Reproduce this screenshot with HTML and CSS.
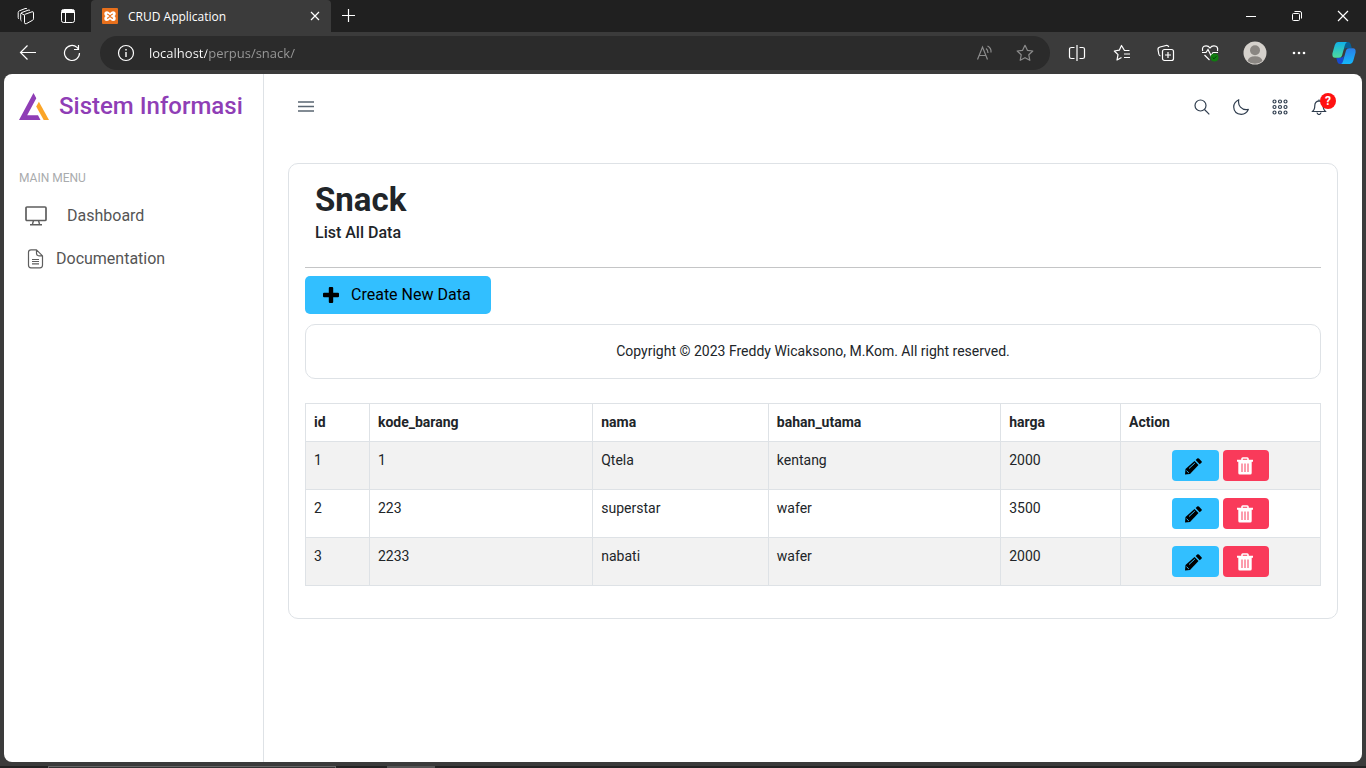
FILE: index.html
```html
<!DOCTYPE html>
<html lang="id">
<head>
<meta charset="utf-8">
<meta name="viewport" content="width=device-width, initial-scale=1">
<title>CRUD Application</title>
<link rel="stylesheet" href="styles.css">
</head>
<body>
<svg class="sprite" aria-hidden="true">
  <symbol id="pencil" viewBox="0 0 18 18">
    <path d="M1 17.500l.5-5.500L10.500 4l4 4L6 17z"/>
    <path d="M11.700 3L13.200 1.500q.8-.7 1.700.1l2.600 2.700q.7.800-.1 1.500L15.700 7.200z"/>
    <path class="pencil-shine" d="M5 11.500l5.800-5.400M2.500 13.700l2.300 2.200"/>
  </symbol>
  <symbol id="trash" viewBox="0 0 18 18">
    <path fill="none" stroke="currentColor" stroke-width="1.600" d="M6 3V1.800Q6 1 6.800 1h4.400q.8 0 .8.800V3"/>
    <path d="M1 2.800h16v2h-1.300V16q0 1.500-1.500 1.500H3.800Q2.300 17.500 2.300 16V4.800H1z"/>
    <path class="trash-slots" d="M6 6.500v8.500M9 6.500v8.500M12 6.500v8.500"/>
  </symbol>
</svg>

<div class="browser">
  <header class="titlebar">
    <button class="chrome-btn strip-btn" aria-label="Workspaces">
      <svg class="line-icon" width="18" height="18" viewBox="0 0 18 18"><path stroke-linejoin="round" d="M7.500 8.500q0-1 1-1.400l6.500-2.300q1.500-.4 1.500 1v6q0 1-1 1.500l-6 3.300q-2 .8-2-1zM4.500 14q-.8-.4-.8-1.500V7.200q0-1.200 1.200-1.700L11 3.200q1.300-.5 2 .3M2 12q-.8-.5-.8-1.500V5.500q0-1.200 1.200-1.700L8 1.600q1.300-.5 2 .2M7.500 8.200L4 6.200"/></svg>
    </button>
    <button class="chrome-btn strip-btn" aria-label="Tab actions">
      <svg class="line-icon" width="16" height="16" viewBox="0 0 16 16"><rect x="1.500" y="1.500" width="13" height="13" rx="2"/><path stroke-width="3" d="M2 3.500h12"/><path d="M5.500 5v9"/></svg>
    </button>
    <div class="tab">
      <svg width="16" height="16" viewBox="0 0 16 16"><rect width="16" height="16" rx="1" fill="#e8701c"/><path d="M5 3.200q1.500 0 3 1.700 1.500-1.700 3-1.700 2.700 0 2.700 2.500 0 1.600-1.200 2.400 1.200.8 1.200 2.300 0 2.500-2.700 2.500-1.500 0-3-1.700-1.500 1.700-3 1.700-2.700 0-2.700-2.500 0-1.500 1.200-2.300-1.200-.8-1.200-2.400 0-2.500 2.700-2.500z" fill="#fff"/><path d="M5 6q1.500.2 3 2.100Q9.500 6.200 11 6M5 10.400q1.500-.2 3-2.300 1.500 2.100 3 2.300" fill="none" stroke="#e8701c" stroke-width="1.200"/></svg>
      <span class="tab-title">CRUD Application</span>
      <button class="chrome-btn tab-close" aria-label="Close tab">
        <svg class="line-icon" width="10" height="10" viewBox="0 0 10 10"><path stroke-width="1.200" d="M1 1l8 8M9 1L1 9"/></svg>
      </button>
    </div>
    <button class="chrome-btn new-tab" aria-label="New tab">
      <svg class="line-icon" width="14" height="14" viewBox="0 0 14 14"><path stroke-width="1.200" d="M6.500 0v13M0 6.500h13"/></svg>
    </button>
    <div class="window-controls">
      <button class="chrome-btn" aria-label="Minimize"><svg class="line-icon" width="10" height="10" viewBox="0 0 10 10"><path d="M0 5.500h10"/></svg></button>
      <button class="chrome-btn" aria-label="Restore"><svg class="line-icon" width="12" height="12" viewBox="0 0 12 12"><rect x="1.500" y="3.500" width="7" height="7" rx="1"/><path d="M3.500 1.500H9q1.500 0 1.500 1.500v5.500"/></svg></button>
      <button class="chrome-btn" aria-label="Close"><svg class="line-icon" width="12" height="12" viewBox="0 0 12 12"><path stroke-width="1.200" d="M1 1l10 10M11 1L1 11"/></svg></button>
    </div>
  </header>

  <div class="toolbar">
    <button class="chrome-btn nav-btn" aria-label="Back"><svg class="line-icon" width="18" height="18" viewBox="0 0 18 18"><path stroke-width="1.200" d="M17 8.500H1.500M8.500 1.500l-7 7 7 7"/></svg></button>
    <button class="chrome-btn nav-btn" aria-label="Refresh"><svg class="line-icon" width="18" height="18" viewBox="0 0 18 18"><path stroke-width="1.200" d="M16.500 9A7.500 7.500 0 1 1 14 3.400L15.500 5M15.500 1v4.500H11"/></svg></button>
    <div class="address">
      <svg class="line-icon" width="18" height="18" viewBox="0 0 18 18"><circle cx="9" cy="9" r="7.500" stroke-width="1.200"/><path stroke-width="1.400" d="M9 8v5M9 5v1.500"/></svg>
      <input class="url" type="text" aria-label="Address" value="localhost/perpus/snack/">
      <button class="chrome-btn address-btn" aria-label="Read aloud"><svg class="line-icon" width="18" height="18" viewBox="0 0 18 18"><path stroke-width="1.200" d="M1.500 15.500L6.500 3l5 12.500M3.200 11.500h6.600M10 4.500q2 1.500 2 4.500M11.500 2q4 2 3.500 6.500"/></svg></button>
      <button class="chrome-btn address-btn" aria-label="Add to favorites"><svg class="line-icon" width="18" height="18" viewBox="0 0 18 18"><path stroke-width="1.200" stroke-linejoin="round" d="M9 1.300l2.400 5 5.400.700-4 3.800 1 5.500L9 13.700l-4.800 2.600 1-5.500-4-3.800 5.400-.7z"/></svg></button>
    </div>
    <div class="extensions">
      <button class="chrome-btn" aria-label="Split screen"><svg class="line-icon" width="18" height="18" viewBox="0 0 18 18"><path stroke-width="1.200" d="M6.500 3.500H3.500Q1.500 3.500 1.500 5v8q0 1.500 2 1.500h3M11.500 3.500h3q2 0 2 1.500v8q0 1.500-2 1.500h-3M9 1v16"/></svg></button>
      <button class="chrome-btn" aria-label="Favorites"><svg class="line-icon" width="18" height="18" viewBox="0 0 18 18"><path stroke-width="1.200" stroke-linejoin="round" d="M16.500 6.500h-5L8.500 1.500 6.300 6.200l-5 .8 3.700 3.600-1 5.400 4.500-2.500M11 10h6M11 13.500h6"/></svg></button>
      <button class="chrome-btn" aria-label="Collections"><svg class="line-icon" width="18" height="18" viewBox="0 0 18 18"><rect x="5.500" y="5.500" width="11" height="11" rx="2" stroke-width="1.200"/><path stroke-width="1.200" d="M11 8v6M8 11h6M3.500 12Q2 11.500 1.800 10L1 5.500Q.8 3.500 3 3l6-1.500q2-.4 2.800 1.500"/></svg></button>
      <button class="chrome-btn" aria-label="Browser essentials"><svg class="line-icon" width="18" height="18" viewBox="0 0 18 18"><path stroke-width="1.200" d="M1.700 7Q.5 2 5 1.800 7.500 1.700 9 4q1.500-2.300 4-2.200Q17.500 2 16.500 7M3.500 11l5 5M1 8.500h4l2-3 3 6 2-3h5"/><circle class="status-ok" cx="13.500" cy="13.500" r="4"/><path stroke="#043f08" d="M11.700 13.600l1.300 1.200 2.300-2.400"/></svg></button>
      <button class="chrome-btn" aria-label="Profile"><svg width="24" height="24" viewBox="0 0 24 24"><circle cx="12" cy="12" r="11.500" fill="#d5d1cc"/><circle cx="12" cy="9.300" r="5" fill="#8a8682"/><path d="M4.500 20q1-4.700 7.500-4.700t7.500 4.700a11.300 11.300 0 0 1-15 0z" fill="#8a8682"/></svg></button>
      <button class="chrome-btn" aria-label="Settings and more"><svg width="14" height="4" viewBox="0 0 14 4" fill="#fff"><circle cx="2" cy="2" r="1.300"/><circle cx="7" cy="2" r="1.300"/><circle cx="12" cy="2" r="1.300"/></svg></button>
      <button class="chrome-btn" aria-label="Copilot"><svg width="24" height="24" viewBox="0 0 24 24">
        <defs>
          <linearGradient id="cp-left" x1="0" y1="0" x2="0" y2="1"><stop offset="0" stop-color="#0fb0e8"/><stop offset="1" stop-color="#50dc9a"/></linearGradient>
          <linearGradient id="cp-right" x1="0" y1="0" x2="0" y2="1"><stop offset="0" stop-color="#2a7de8"/><stop offset="1" stop-color="#14b8fa"/></linearGradient>
        </defs>
        <path d="M13 1h3q2 0 2.600 2l1.200 4h-5q-2 0-2.600 2z" fill="#075f95"/>
        <path d="M11 23H8q-2 0-2.600-2L4.200 16.500h5q2 0 2.600-2z" fill="#174bd0"/>
        <path d="M6 1h9q-1.300.5-1.900 2.500L10 14.500q-.7 2.200-3 2.200H3Q0 16.700.4 12.500L2.800 4Q3.700 1 6 1z" fill="url(#cp-left)"/>
        <path d="M18 23H9q1.300-.5 1.900-2.500L14 9.500q.7-2.200 3-2.200h4q3 0 2.600 4.200L21.200 20q-.9 3-3.200 3z" fill="url(#cp-right)"/>
      </svg></button>
    </div>
  </div>

  <div class="page">
    <aside class="sidebar">
      <a class="brand" href="#">
        <svg width="30" height="28" viewBox="0 0 30 28"><path d="M0 28L14.500 1l2.800 5.200L8.200 23.300H19L21.500 28z" fill="#8f3eb6"/><path d="M17.200 14.500l2.700-4.700L30 28h-5.300z" fill="#fba527"/></svg>
        <span>Sistem Informasi</span>
      </a>
      <h2 class="menu-label">MAIN MENU</h2>
      <nav class="menu">
        <a class="menu-item menu-item-wide" href="#">
          <svg width="22" height="20" viewBox="0 0 22 20"><rect x="1" y="1" width="20" height="13.500" rx="1" stroke-width="1.700"/><path stroke-width="1.400" d="M8.500 14.500L7.500 18M13.500 14.500l1 3.500M5 18.800h12"/></svg>
          <span>Dashboard</span>
        </a>
        <a class="menu-item" href="#">
          <svg width="22" height="20" viewBox="0 0 22 20"><path stroke-width="1.200" stroke-linejoin="round" d="M11.500.800H6Q3.500.800 3.500 3.300v13Q3.500 18.800 6 18.800h9q2.500 0 2.500-2.500V6.800zM11.500.800v3.500q0 2.500 2.500 2.500h3.500M7 10.500h7M7 12.500h7M7 14.800h7"/></svg>
          <span>Documentation</span>
        </a>
      </nav>
    </aside>

    <main class="content">
      <div class="topbar">
        <button class="tool menu-toggle" aria-label="Toggle menu"><svg width="16" height="12" viewBox="0 0 16 12"><path d="M0 1h16M0 5.500h16M0 10h16"/></svg></button>
        <div class="tools">
          <button class="tool" aria-label="Search"><svg width="16" height="16" viewBox="0 0 16 16"><circle cx="6.500" cy="6.500" r="5.500"/><path d="M10.500 10.500l4.800 4.800"/></svg></button>
          <button class="tool" aria-label="Dark mode"><svg width="16" height="16" viewBox="0 0 16 16"><path stroke-linejoin="round" d="M5.800.700Q4.800 5 7.500 8.200q3 3.300 7.800 2.200-2 4.700-7 4.900Q1 14.800.7 8 .8 3 5.800.7z"/></svg></button>
          <button class="tool" aria-label="Apps"><svg width="16" height="16" viewBox="0 0 16 16"><g><circle cx="2.500" cy="2.500" r="1.500"/><circle cx="8" cy="2.500" r="1.500"/><circle cx="13.500" cy="2.500" r="1.500"/><circle cx="2.500" cy="8" r="1.500"/><circle cx="8" cy="8" r="1.500"/><circle cx="13.500" cy="8" r="1.500"/><circle cx="2.500" cy="13.500" r="1.500"/><circle cx="8" cy="13.500" r="1.500"/><circle cx="13.500" cy="13.500" r="1.500"/></g></svg></button>
          <button class="tool" aria-label="Notifications"><svg width="16" height="16" viewBox="0 0 16 16"><path stroke-linejoin="round" d="M8 .500v1.300Q3.800 2.500 3.800 6.500q0 4.500-2.600 6h13.600q-2.600-1.500-2.600-6Q12.200 2.500 8 1.800M6 13.500q.3 2 2 2t2-2"/></svg><span class="badge">?</span></button>
        </div>
      </div>

      <section class="card">
        <div class="card-heading">
          <h1>Snack</h1>
          <p>List All Data</p>
        </div>
        <hr>
        <button class="create"><svg width="16" height="16" viewBox="0 0 16 16"><path d="M5.800 1q0-1 1-1h2.400q1 0 1 1v4.800H15q1 0 1 1v2.400q0 1-1 1h-4.800V15q0 1-1 1H6.800q-1 0-1-1v-4.800H1q-1 0-1-1V6.800q0-1 1-1h4.800z"/></svg><span>Create New Data</span></button>
        <footer class="copyright">Copyright © 2023 Freddy Wicaksono, M.Kom. All right reserved.</footer>
        <table class="data">
          <colgroup><col class="col-id"><col class="col-code"><col class="col-name"><col class="col-main"><col class="col-price"><col></colgroup>
          <thead>
            <tr><th>id</th><th>kode_barang</th><th>nama</th><th>bahan_utama</th><th>harga</th><th>Action</th></tr>
          </thead>
          <tbody>
            <tr><td>1</td><td>1</td><td>Qtela</td><td>kentang</td><td>2000</td><td><div class="actions"><button class="edit" aria-label="Edit Qtela"><svg width="18" height="18"><use href="#pencil"/></svg></button><button class="delete" aria-label="Delete Qtela"><svg width="18" height="18"><use href="#trash"/></svg></button></div></td></tr>
            <tr><td>2</td><td>223</td><td>superstar</td><td>wafer</td><td>3500</td><td><div class="actions"><button class="edit" aria-label="Edit superstar"><svg width="18" height="18"><use href="#pencil"/></svg></button><button class="delete" aria-label="Delete superstar"><svg width="18" height="18"><use href="#trash"/></svg></button></div></td></tr>
            <tr><td>3</td><td>2233</td><td>nabati</td><td>wafer</td><td>2000</td><td><div class="actions"><button class="edit" aria-label="Edit nabati"><svg width="18" height="18"><use href="#pencil"/></svg></button><button class="delete" aria-label="Delete nabati"><svg width="18" height="18"><use href="#trash"/></svg></button></div></td></tr>
          </tbody>
        </table>
      </section>
    </main>
  </div>

  <div class="taskbar" aria-hidden="true"><span class="task-search"></span><span class="task-active"></span></div>
</div>
</body>
</html>
```
FILE: styles.css
```css
* {
  box-sizing: border-box;
}

body {
  margin: 0;
  font-family: Roboto, "Liberation Sans", sans-serif;
  font-size: 14px;
  line-height: 21px;
  color: #212529;
}

button {
  margin: 0;
  padding: 0;
  border: 0;
  background: none;
  color: inherit;
  font: inherit;
  cursor: pointer;
}

svg {
  display: block;
  flex: none;
}

a {
  color: inherit;
  text-decoration: none;
}

h1,
h2,
p {
  margin: 0;
}

.sprite {
  position: absolute;
  width: 0;
  height: 0;
}

/* Browser frame */
.browser {
  display: flex;
  flex-direction: column;
  min-height: 100vh;
  background: #3b3b3b;
  color: #fff;
  font-family: "Open Sans", "Noto Sans", sans-serif;
  font-size: 12px;
}

.line-icon {
  fill: none;
  stroke: currentColor;
}

.chrome-btn {
  display: flex;
  align-items: center;
  justify-content: center;
}

.titlebar {
  display: flex;
  height: 32px;
  padding-left: 5px;
  background: #202020;
}

.strip-btn {
  width: 42px;
}

.tab {
  display: flex;
  align-items: center;
  gap: 10px;
  width: 240px;
  margin-left: 2px;
  padding: 0 8px 0 11px;
  border-radius: 4px 4px 0 0;
  background: #3b3b3b;
}

.tab-title {
  flex: 1;
}

.tab-close {
  width: 16px;
  height: 16px;
}

.new-tab {
  width: 35px;
}

.window-controls {
  display: flex;
  margin-left: auto;
}

.window-controls .chrome-btn {
  width: 46px;
}

.toolbar {
  display: flex;
  align-items: center;
  height: 42px;
  padding-left: 6px;
}

.nav-btn {
  width: 44px;
  height: 34px;
}

.address {
  display: flex;
  flex: 1;
  align-items: center;
  height: 34px;
  margin: 0 5px 0 6px;
  padding: 0 5px 0 17px;
  border-radius: 17px;
  background: #2b2b2b;
}

.url {
  flex: 1;
  min-width: 0;
  margin-left: 14px;
  padding: 0;
  border: 0;
  outline: 0;
  background: linear-gradient(90deg, #fff 58px, #9a9a9a 58px);
  background-clip: text;
  -webkit-text-fill-color: transparent;
  color: #fff;
  font-family: "Open Sans", "Noto Sans", sans-serif;
  font-size: 13px;
  line-height: 20px;
}

.address-btn {
  width: 40px;
  height: 34px;
  color: #8c8c8c;
}

.extensions {
  display: grid;
  grid-template-columns: repeat(7, 1fr);
  width: 311px;
}

.status-ok {
  fill: #107c10;
  stroke: none;
}

.taskbar {
  display: flex;
  height: 2px;
  margin-top: 4px;
  padding-left: 48px;
  background: #232323;
}

.task-search {
  width: 288px;
  margin-right: 51px;
  border: 1px solid #666;
  border-bottom: 0;
  background: #333;
}

.task-active {
  width: 48px;
  background: #555;
}

/* Application shell */
.page {
  display: flex;
  flex: 1;
  margin: 0 4px;
  border-radius: 8px;
  background: #fff;
  color: #212529;
  font-family: Roboto, "Liberation Sans", sans-serif;
  font-size: 14px;
}

.sidebar {
  width: 260px;
  flex: none;
  padding: 0 15px;
  border-right: 1px solid #dee2e6;
}

.brand {
  display: flex;
  align-items: center;
  gap: 10px;
  height: 64px;
  color: #8f3eb6;
  font-size: 24px;
  font-weight: 500;
  line-height: 28px;
}

.menu-label {
  margin: 30px 0 16px;
  color: #a9abad;
  font-size: 12px;
  font-weight: 400;
  line-height: 20px;
}

.menu {
  display: flex;
  flex-direction: column;
  gap: 19px;
  padding: 0 6px;
}

.menu-item {
  display: flex;
  align-items: center;
  gap: 9px;
  color: #555;
  font-size: 16px;
  line-height: 24px;
}

.menu-item-wide {
  gap: 20px;
}

.menu-item svg {
  fill: none;
  stroke: #5e5e5e;
}

.content {
  flex: 1;
  min-width: 0;
  padding: 0 24px 24px;
}

.topbar {
  display: flex;
  align-items: center;
  justify-content: space-between;
  height: 66px;
  margin-bottom: 23px;
  padding-left: 10px;
}

.tools {
  display: flex;
  gap: 23px;
  padding-right: 11px;
}

.tool {
  position: relative;
}

.tool svg {
  fill: none;
  stroke: #2f3d4e;
  stroke-width: 1.2;
}

.menu-toggle svg {
  stroke: #5a6672;
  stroke-width: 1.6;
}

.badge {
  position: absolute;
  top: -6px;
  left: 9px;
  width: 16px;
  height: 16px;
  border-radius: 8px;
  background: #f11;
  color: #fff;
  font-size: 12px;
  font-weight: 700;
  line-height: 16px;
}

/* Data card */
.card {
  padding: 16px 16px 32px;
  border: 1px solid #dee2e6;
  border-radius: 10px;
}

.card-heading {
  padding: 0 10px;
}

.card-heading h1 {
  font-size: 33px;
  font-weight: 700;
  line-height: 40px;
}

.card-heading p {
  margin-top: 2px;
  font-size: 16px;
  font-weight: 500;
  line-height: 22px;
}

hr {
  margin: 23px 0 8px;
  border: 0;
  border-top: 1px solid #c4c5c6;
}

.create {
  display: flex;
  align-items: center;
  gap: 12px;
  min-width: 186px;
  height: 38px;
  padding: 0 14px 0 18px;
  border-radius: 5px;
  background: #32bfff;
  color: #000;
  font-size: 16px;
  line-height: 24px;
}

.copyright {
  margin: 10px 0 24px;
  padding: 16px;
  border: 1px solid #dee2e6;
  border-radius: 10px;
  text-align: center;
}

.data {
  width: 100%;
  table-layout: fixed;
  border-collapse: collapse;
}

.data th,
.data td {
  padding: 8px;
  border: 1px solid #dee2e6;
  text-align: left;
  vertical-align: top;
}

.data th {
  font-weight: 700;
}

.data tbody tr:nth-child(odd) {
  background: #f2f2f2;
}

.col-id {
  width: 6.3%;
}

.col-code {
  width: 22%;
}

.col-name {
  width: 17.3%;
}

.col-main {
  width: 22.9%;
}

.col-price {
  width: 11.8%;
}

.actions {
  display: flex;
  justify-content: center;
  gap: 4px;
}

.edit,
.delete {
  display: flex;
  align-items: center;
  width: 47px;
  height: 31px;
  padding-left: 12px;
  border-radius: 4px;
  background: #32bfff;
  color: #000;
}

.delete {
  width: 46px;
  padding-left: 13px;
  background: #f93a5a;
  color: #fff;
}

.edit svg,
.delete svg {
  fill: currentColor;
}

.pencil-shine {
  fill: none;
  stroke: #32bfff;
}

.trash-slots {
  fill: none;
  stroke: #f93a5a;
}
```
